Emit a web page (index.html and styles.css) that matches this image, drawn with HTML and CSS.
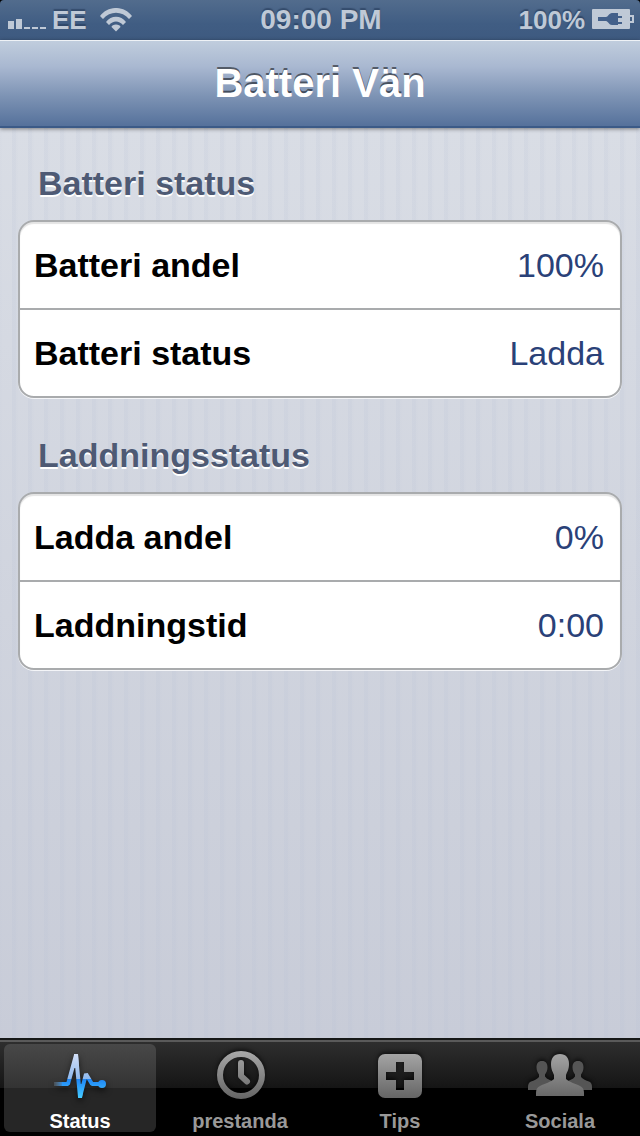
FILE: index.html
```html
<!DOCTYPE html>
<html lang="sv">
<head>
  <meta charset="UTF-8" />
  <meta name="viewport" content="width=device-width, initial-scale=1.0" />
  <title>Batteri Vän</title>
  <link rel="stylesheet" href="styles.css">
</head>
<body>
  <div class="status-bar">
    <div class="status-left">
      <svg class="signal" width="38" height="22" viewBox="0 0 38 22" fill="currentColor" aria-hidden="true">
        <path d="M0 13h6v8H0zM8 11h6v10H8zM16 19h6v2h-6zM24 19h6v2h-6zM32 19h6v2h-6z" />
      </svg>
      <span class="small">EE</span>
      <svg class="wifi" width="32" height="24" viewBox="0 0 32 24" aria-hidden="true">
        <g fill="currentColor">
          <path d="M0 8C8-2.700 24-2.700 32 8l-3 3C22 2.500 10 2.500 3 11z" />
          <path d="M6 14c5-7 15-7 20 0l-3 3c-4-4.700-10-4.700-14 0z" />
          <path d="M16 23.500l-4.500-4.500c0-3.500 9-3.500 9 0z" />
        </g>
      </svg>
    </div>
    <span>09:00 PM</span>
    <div class="status-right">
      <span class="small">100%</span>
      <svg class="battery" width="42" height="20" viewBox="0 0 42 20" aria-hidden="true">
        <rect width="38" height="20" rx="1" fill="currentColor" />
        <path d="M38 7h3v6h-3" fill="none" stroke="currentColor" stroke-width="2" />
        <path d="M6 8h8c2 0 3-4 6-4h6v3h4v2h-4v4h4v2h-4v1h-6c-3 0-4-4-6-4H6z" fill="#43608a" />
      </svg>
    </div>
  </div>

  <header class="nav-bar">
    <h1>Batteri Vän</h1>
  </header>

  <main>
    <section>
      <h2>Batteri status</h2>
      <dl class="group">
        <div class="row"><dt>Batteri andel</dt><dd>100%</dd></div>
        <div class="row"><dt>Batteri status</dt><dd>Ladda</dd></div>
      </dl>
    </section>
    <section>
      <h2>Laddningsstatus</h2>
      <dl class="group">
        <div class="row"><dt>Ladda andel</dt><dd>0%</dd></div>
        <div class="row"><dt>Laddningstid</dt><dd>0:00</dd></div>
      </dl>
    </section>
  </main>

  <nav class="tab-bar">
    <a class="tab active" href="#status" aria-current="page">
      <svg width="80" height="64" viewBox="0 0 80 64" aria-hidden="true">
        <defs>
          <linearGradient id="pulse" gradientUnits="userSpaceOnUse" x1="0" y1="10" x2="0" y2="54">
            <stop offset="0" stop-color="#d3dff8" />
            <stop offset=".56" stop-color="#8fb9ee" />
            <stop offset=".57" stop-color="#1f86f6" />
            <stop offset="1" stop-color="#45cbff" />
          </linearGradient>
          <linearGradient id="trail" gradientUnits="userSpaceOnUse" x1="14" y1="0" x2="23" y2="0">
            <stop offset="0" stop-color="#7b93a8" stop-opacity=".3" />
            <stop offset="1" stop-color="#2e93f0" />
          </linearGradient>
        </defs>
        <path d="M14 38h8v4h-8z" fill="url(#trail)" />
        <path d="M22 40h6l8-29 4 42 6-23 6 10h10" fill="none" stroke="url(#pulse)" stroke-width="4" stroke-linejoin="bevel" />
        <path d="M34 10h4l1 14h-5zM38 54h4l2-14h-5z" fill="url(#pulse)" />
        <circle cx="62" cy="40" r="4" fill="url(#pulse)" />
      </svg>
      <span>Status</span>
    </a>
    <a class="tab" href="#prestanda">
      <svg width="80" height="64" viewBox="0 0 80 64" aria-hidden="true">
        <defs>
          <linearGradient id="gray" gradientUnits="userSpaceOnUse" x1="0" y1="7" x2="0" y2="55">
            <stop offset="0" stop-color="#a8a8a8" />
            <stop offset="1" stop-color="#646464" />
          </linearGradient>
        </defs>
        <g fill="none" stroke="url(#gray)" stroke-width="6">
          <circle cx="41" cy="31" r="21" />
          <path d="M41 19v13l6 5.500" stroke-linecap="round" stroke-linejoin="round" />
        </g>
      </svg>
      <span>prestanda</span>
    </a>
    <a class="tab" href="#tips">
      <svg width="80" height="64" viewBox="0 0 80 64" aria-hidden="true">
        <path fill="url(#gray)" fill-rule="evenodd" d="M25 10h30a7 7 0 0 1 7 7v30a7 7 0 0 1-7 7H25a7 7 0 0 1-7-7V17a7 7 0 0 1 7-7zM36 18v10H26v8h10v10h8V36h10v-8H44V18z" />
      </svg>
      <span>Tips</span>
    </a>
    <a class="tab" href="#sociala">
      <svg width="80" height="64" viewBox="0 0 80 64" aria-hidden="true">
        <g fill="#555">
          <path d="M22 17c4 0 5.500 2.500 5.500 6.500 0 3.500-1.500 5.500-2.500 7v2c2 3 6 4 10 5.500V46H8v-3c0-3 1-4.500 3-5.500 3-1 6-2.500 8-4.500v-2.500c-1-1.500-2.500-3.500-2.500-7 0-4 1.500-6.500 5.500-6.500z" />
          <path d="M58 17c-4 0-5.500 2.500-5.500 6.500 0 3.500 1.500 5.500 2.500 7v2c-2 3-6 4-10 5.500V46h27v-3c0-3-1-4.500-3-5.500-3-1-6-2.500-8-4.500v-2.500c1-1.500 2.500-3.500 2.500-7 0-4-1.500-6.500-5.500-6.500z" />
        </g>
        <path fill="url(#gray)" d="M40 10c6 0 9 4 9 10s-2 8-3 11v4c3 3 9 4.500 14 7 3 1.500 4 3.500 4 7V52H16v-3c0-3.500 1-5.500 4-7 5-2.500 11-4 14-7v-4c-1-3-3-5-3-11s3-10 9-10z" />
      </svg>
      <span>Sociala</span>
    </a>
  </nav>
</body>
</html>
```
FILE: styles.css
```css
* {
  box-sizing: border-box;
}
body {
  display: flex;
  flex-direction: column;
  min-height: 100vh;
  margin: 0;
  background: #000;
  color: #000;
  font-family: "Liberation Sans", Helvetica, Arial, sans-serif;
}
h1, h2, dl, dd {
  margin: 0;
}

/* status bar */
.status-bar {
  display: grid;
  grid-template-columns: 1fr auto 1fr;
  height: 40px;
  padding: 0 6px 0 8px;
  border-radius: 4px 4px 0 0;
  background: linear-gradient(#526c8d, #405d83 60%, #3e5a80);
  color: #bfc9d6;
  font-size: 28px;
  font-weight: bold;
  line-height: 40px;
  text-shadow: 0 -2px 1px rgba(30, 50, 80, 0.5);
}
.status-left,
.status-right {
  display: flex;
  align-items: flex-start;
}
.status-left {
  gap: 6px;
}
.status-right {
  justify-content: flex-end;
  gap: 7px;
}
.small {
  font-size: 26px;
}
.signal,
.wifi {
  margin-top: 8px;
}
.wifi {
  margin-left: 7px;
}
.battery {
  margin-top: 9px;
}

/* navigation bar */
.nav-bar {
  position: relative;
  height: 88px;
  border-top: 1px solid #eef2f6;
  border-bottom: 2px solid #3b5a87;
  background: linear-gradient(#c0cddd, #a9b8d1 30%, #7d93b4 65%, #55719b);
  box-shadow: 0 1px 4px rgba(0, 0, 0, 0.45);
  color: #fff;
  text-align: center;
}
h1 {
  font-size: 40px;
  line-height: 85px;
  text-shadow: 0 -2px 0 rgba(0, 0, 0, 0.5);
}

/* grouped table */
main {
  flex: 1;
  padding: 35px 18px;
  background:
    repeating-linear-gradient(90deg, rgba(180, 190, 212, 0.04) 0 2px, transparent 2px 12px, rgba(180, 190, 212, 0.15) 12px 16px),
    linear-gradient(#d9dde5, #c8ccd8);
}
section + section {
  margin-top: 37px;
}
h2 {
  margin: 0 20px 17px;
  color: #4e5a74;
  font-size: 34px;
  line-height: 40px;
  text-shadow: 0 2px 0 #fff;
}
.group {
  border: 2px solid #a9abad;
  border-radius: 16px;
  background: #fff;
  box-shadow: 0 1px 0 #f4f5f8, inset 0 2px 1px #e4e4e4;
}
.row {
  display: flex;
  align-items: center;
  justify-content: space-between;
  height: 86px;
  padding: 0 16px 0 14px;
  font-size: 34px;
  line-height: 40px;
}
.row + .row {
  height: 88px;
  border-top: 2px solid #a9abad;
}
dt {
  font-weight: bold;
}
dd {
  color: #2a4178;
}

/* tab bar */
.tab-bar {
  display: flex;
  height: 98px;
  border-top: 2px solid #161817;
  background: linear-gradient(#5a5a5a 0 2px, #2e2e2e 2px, #151515 48px, #000 48px);
}
.tab {
  display: flex;
  flex: 1;
  flex-direction: column;
  align-items: center;
  margin: 4px;
  border-radius: 6px;
  color: #999;
  font-size: 20px;
  font-weight: bold;
  line-height: 26px;
  text-decoration: none;
}
.tab svg {
  flex: none;
  filter: drop-shadow(0 -2px 2px rgba(0, 0, 0, 0.6));
}
.tab.active {
  background: linear-gradient(#484848, #333 44px, #262626 44px);
  color: #fff;
}
.tab.active svg {
  filter: drop-shadow(0 3px 3px rgba(0, 0, 0, 0.6));
}
```
